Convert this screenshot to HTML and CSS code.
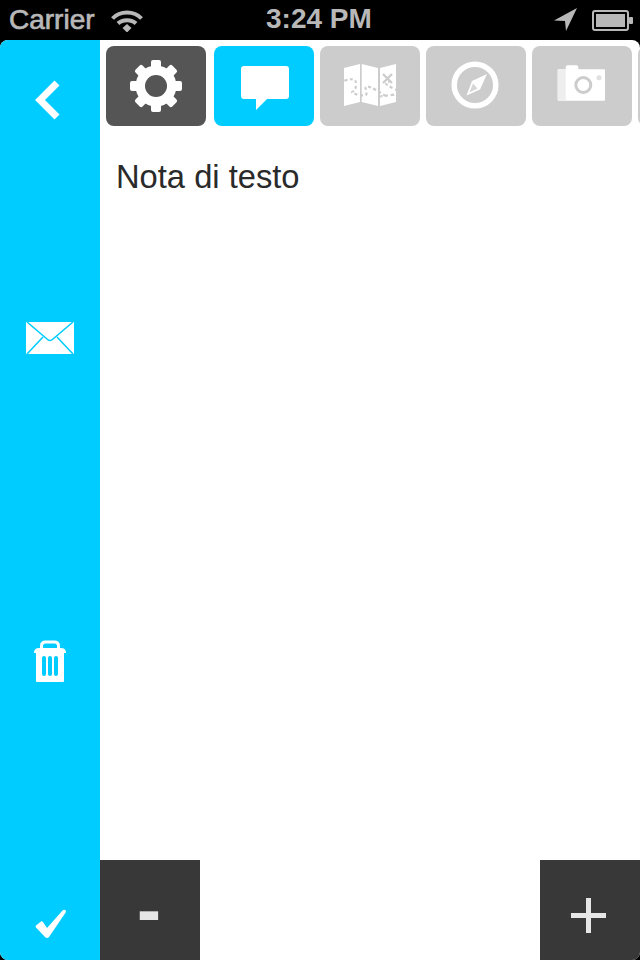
FILE: index.html
```html
<!DOCTYPE html>
<html lang="it">
<head>
<meta charset="utf-8">
<title>Nota di testo</title>
<link rel="stylesheet" href="styles.css">
</head>
<body>
<div class="status">
  <div class="status-left">
    <span class="carrier">Carrier</span>
    <svg class="wifi" width="34" height="24" viewBox="0 0 34 24"><g fill="none" stroke="#b8b8b8" stroke-width="4"><path d="M2.500 10.500C10 2.500 24 2.500 31.500 10.500"/><path d="M8 15.500C12.500 11 21.500 11 26 15.500"/></g><path d="M12.500 20L17 16l4.500 4L17 24.500z" fill="#b8b8b8"/></svg>
  </div>
  <span class="clock">3:24 PM</span>
  <div class="status-right">
    <svg class="arrow" width="24" height="24" viewBox="0 0 24 24"><path d="M0 12.500L23 0 12 23l-1-10z" fill="#b8b8b8"/></svg>
    <svg class="battery" width="42" height="21" viewBox="0 0 42 21"><rect x="1" y="1" width="35" height="19" rx="2" fill="none" stroke="#b8b8b8" stroke-width="2"/><rect x="4" y="4" width="29" height="13" fill="#b8b8b8"/><rect x="37" y="7" width="4" height="7" rx="1" fill="#b8b8b8"/></svg>
  </div>
</div>
<div class="screen">
  <aside class="side">
    <svg class="ico-back" width="28" height="40" viewBox="0 0 28 40"><path d="M23 3L6 20l17 17" fill="none" stroke="#fff" stroke-width="7"/></svg>
    <svg class="ico-mail" width="48" height="32" viewBox="0 0 48 32"><rect width="48" height="32" fill="#fff"/><path d="M1 0l20 17q3 3 6 0L47 0M1 32l16-17M47 32L31 15" fill="none" stroke="#0cf" stroke-width="1.500"/></svg>
    <svg class="ico-trash" width="32" height="42" viewBox="0 0 32 42"><path d="M7.500 9V6q0-4 4-4h9q4 0 4 4v3" fill="none" stroke="#fff" stroke-width="3"/><path d="M0 13q0-5 5-5h22q5 0 5 5z" fill="#fff"/><path d="M2 13h28v28a1 1 0 0 1-1 1H3a1 1 0 0 1-1-1z" fill="#fff"/><path d="M10 18v16M16 18v16M22 18v16" stroke="#0cf" stroke-width="4" stroke-linecap="round"/></svg>
    <svg class="ico-check" width="34" height="32" viewBox="0 0 34 32"><path d="M3 19.500q-1-1 0-2l5-4q1-.5 2 .5l4 6L30 2q3-1 3 2L16 29q-2 2-4 0z" fill="#fff"/></svg>
  </aside>
  <main class="main">
    <nav class="tabs">
      <div class="tab tab-dark">
        <svg class="tab-ico" viewBox="0 0 100 80"><g fill="#fff"><rect x="45" y="14" width="10" height="52" rx="2"/><rect x="24" y="35" width="52" height="10" rx="2"/><rect x="45" y="14" width="10" height="52" rx="2" transform="rotate(45 50 40)"/><rect x="45" y="14" width="10" height="52" rx="2" transform="rotate(-45 50 40)"/><circle cx="50" cy="40" r="20.500"/></g><circle cx="50" cy="40" r="11" fill="#555"/></svg>
      </div>
      <div class="tab tab-active">
        <svg class="tab-ico" viewBox="0 0 100 80"><path d="M30 20h42a3 3 0 0 1 3 3v27a3 3 0 0 1-3 3H53L42 64V53H30a3 3 0 0 1-3-3V23a3 3 0 0 1 3-3z" fill="#fff"/></svg>
      </div>
      <div class="tab">
        <svg class="tab-ico" viewBox="0 0 100 80"><g fill="#fff"><path d="M24 22l16-4v38l-16 4z"/><path d="M41.700 18L58 22v38l-16.300-4z"/><path d="M60 22l16-4v38l-16 4z"/></g><path d="M24.300 34.700Q29 33 32.700 33.300T36 39T32.700 45.700T39.300 49T46 44T56 44T62.700 50.700T71 49T73.300 42.300T69.300 35.700" fill="none" stroke="#ccc" stroke-width="2.200" stroke-dasharray="3 2.500"/><path d="M63 28l9 9M72 28l-9 9" stroke="#ccc" stroke-width="2.200"/></svg>
      </div>
      <div class="tab">
        <svg class="tab-ico" viewBox="0 0 100 80"><circle cx="49" cy="39" r="20.800" fill="none" stroke="#fff" stroke-width="5.500"/><path d="M61 28L46 35 40.500 49.500 54 43.500z" fill="#fff"/><path d="M47 37.500L43.500 46.500 51.500 42.500z" fill="#d6d6d6"/></svg>
      </div>
      <div class="tab">
        <svg class="tab-ico" viewBox="0 0 100 80"><path d="M25.700 24.300a1 1 0 0 1 1-1h7v-2a2 2 0 0 1 2-2h8.600a2 2 0 0 1 2 2v2H72a1 1 0 0 1 1 1v29.400a1 1 0 0 1-1 1H26.700a1 1 0 0 1-1-1z" fill="#fff"/><path d="M25.700 24.300a1 1 0 0 1 1-1h7v31.400h-7a1 1 0 0 1-1-1z" fill="#eee"/><circle cx="51.300" cy="39" r="7.500" fill="none" stroke="#ccc" stroke-width="3"/><circle cx="67" cy="31.700" r="2.500" fill="#e0e0e0"/></svg>
      </div>
      <div class="tab"></div>
    </nav>
    <p class="note">Nota di testo</p>
    <div class="actions">
      <button class="action action-minus" type="button">-</button>
      <button class="action action-plus" type="button">
        <svg width="35" height="35" viewBox="0 0 35 35"><path d="M17.500 0v35M0 17.500h35" stroke="#e6e6e6" stroke-width="5"/></svg>
      </button>
    </div>
  </main>
</div>
</body>
</html>
```
FILE: styles.css
```css
* { box-sizing: border-box; }
html, body { margin: 0; height: 100%; background: #000; }
body { width: 640px; height: 960px; overflow: hidden; font-family: "Liberation Sans", Arial, sans-serif; }
svg { display: block; flex: none; }

.status { position: relative; height: 40px; display: flex; align-items: center; justify-content: space-between; padding: 0 6px 0 9px; color: #b8b8b8; font-size: 28px; font-weight: 700; }
.status-left { display: flex; align-items: center; gap: 15px; }
.status-right { display: flex; align-items: center; gap: 14px; }
.carrier { font-weight: 400; -webkit-text-stroke: 0.7px #b8b8b8; }
.clock { position: absolute; left: 266px; top: 3px; line-height: 32px; }

.screen { height: 920px; display: flex; background: #fff; border-radius: 8px; overflow: hidden; }
.side { flex: 0 0 100px; background: #0cf; display: flex; flex-direction: column; align-items: center; }
.ico-back { margin-top: 40px; margin-left: -4px; }
.ico-mail { margin-top: 202px; }
.ico-trash { margin-top: 286px; }
.ico-check { margin-top: 226px; }

.main { flex: 1; min-width: 0; display: flex; flex-direction: column; }
.tabs { display: flex; gap: 6px; padding: 6px 0 0 6px; overflow: hidden; }
.tab { flex: 0 0 100px; height: 80px; background: #ccc; border-radius: 8px; }
.tab-dark { background: #555; margin-right: 2px; }
.tab-active { background: #0cf; }
.tab-ico { width: 100px; height: 80px; }

.note { margin: 32px 0 0 16px; font-size: 32.7px; line-height: 38px; color: #2a2a2a; flex: 1; }
.actions { display: flex; justify-content: space-between; }
.action { width: 100px; height: 100px; border: 0; padding: 0; background: #383838; color: #e6e6e6; display: flex; align-items: center; justify-content: center; font-family: "Liberation Sans", Arial, sans-serif; }
.action-minus { font-size: 72px; font-weight: 700; padding: 0 2px 2px 0; }
.action-plus { padding: 10px 3px 0 0; }
```
